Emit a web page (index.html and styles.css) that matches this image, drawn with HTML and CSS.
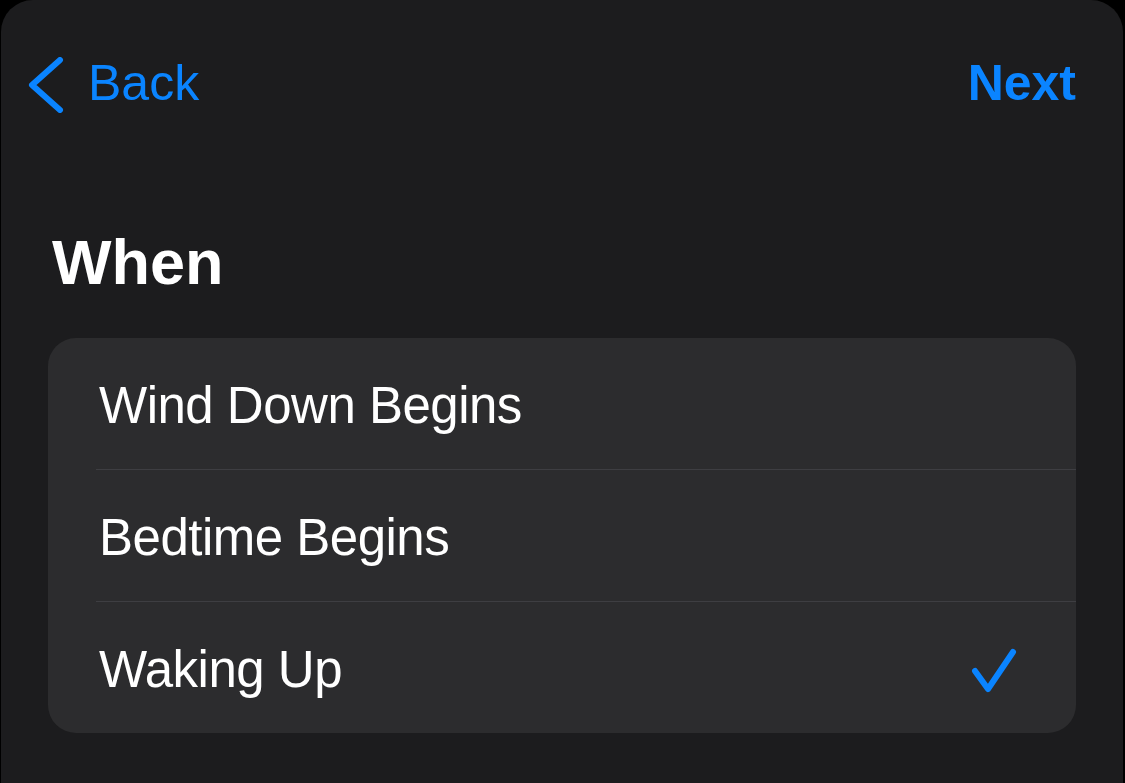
FILE: index.html
```html
<!DOCTYPE html>
<html lang="en">
<head>
<meta charset="utf-8">
<title>When</title>
<link rel="stylesheet" href="styles.css">
</head>
<body>
<div class="sheet">
  <nav class="navbar">
    <a class="nav-back" href="#">
      <svg class="chevron" width="36" height="56" viewBox="0 0 36 56" aria-hidden="true">
        <path d="M32 3 L4 28 L32 53" fill="none" stroke="#0a84ff" stroke-width="6" stroke-linecap="round" stroke-linejoin="round"/>
      </svg>
      <span>Back</span>
    </a>
    <a class="nav-next" href="#">Next</a>
  </nav>
  <h1 class="title">When</h1>
  <ul class="list">
    <li class="row"><span class="label">Wind Down Begins</span></li>
    <li class="row"><span class="label">Bedtime Begins</span></li>
    <li class="row selected"><span class="label">Waking Up</span>
      <svg class="check" width="50" height="50" viewBox="0 0 50 50" aria-hidden="true">
        <path d="M7 26 L20 44 L45 7" fill="none" stroke="#0a84ff" stroke-width="6" stroke-linecap="round" stroke-linejoin="round"/>
      </svg>
    </li>
  </ul>
</div>
</body>
</html>
```
FILE: styles.css
```css
html, body {
  margin: 0;
  padding: 0;
  height: 100%;
  background: #000;
  font-family: "Liberation Sans", Arial, sans-serif;
}

.sheet {
  box-sizing: border-box;
  height: 100%;
  margin: 0 2px 0 1px;
  background: #1c1c1e;
  border-radius: 32px 32px 0 0;
  padding: 40px 47px 0 47px;
}

.navbar {
  display: flex;
  justify-content: space-between;
  align-items: center;
  height: 86px;
  margin: 0 0 0 -20px;
}

.nav-back {
  display: flex;
  align-items: center;
  gap: 24px;
  color: #0a84ff;
  text-decoration: none;
  font-size: 50px;
}

.chevron {
  display: block;
  margin-top: 4px;
}

.nav-next {
  color: #0a84ff;
  text-decoration: none;
  font-size: 50px;
  font-weight: 700;
}

.title {
  margin: 97px 0 0 4px;
  color: #fff;
  font-size: 63px;
  font-weight: 700;
  line-height: 78px;
}

.list {
  list-style: none;
  margin: 37px 0 0;
  padding: 0;
  background: #2c2c2e;
  border-radius: 28px;
  overflow: hidden;
}

.row {
  display: flex;
  align-items: center;
  justify-content: space-between;
  box-sizing: border-box;
  height: 131px;
  padding-top: 4px;
  margin-left: 48px;
  padding-right: 58px;
  color: #fff;
  font-size: 51px;
}

.row + .row {
  height: 132px;
  border-top: 1px solid #3e3e42;
}

.label {
  margin-left: 3px;
  letter-spacing: -0.5px;
}

.check {
  display: block;
}
```
